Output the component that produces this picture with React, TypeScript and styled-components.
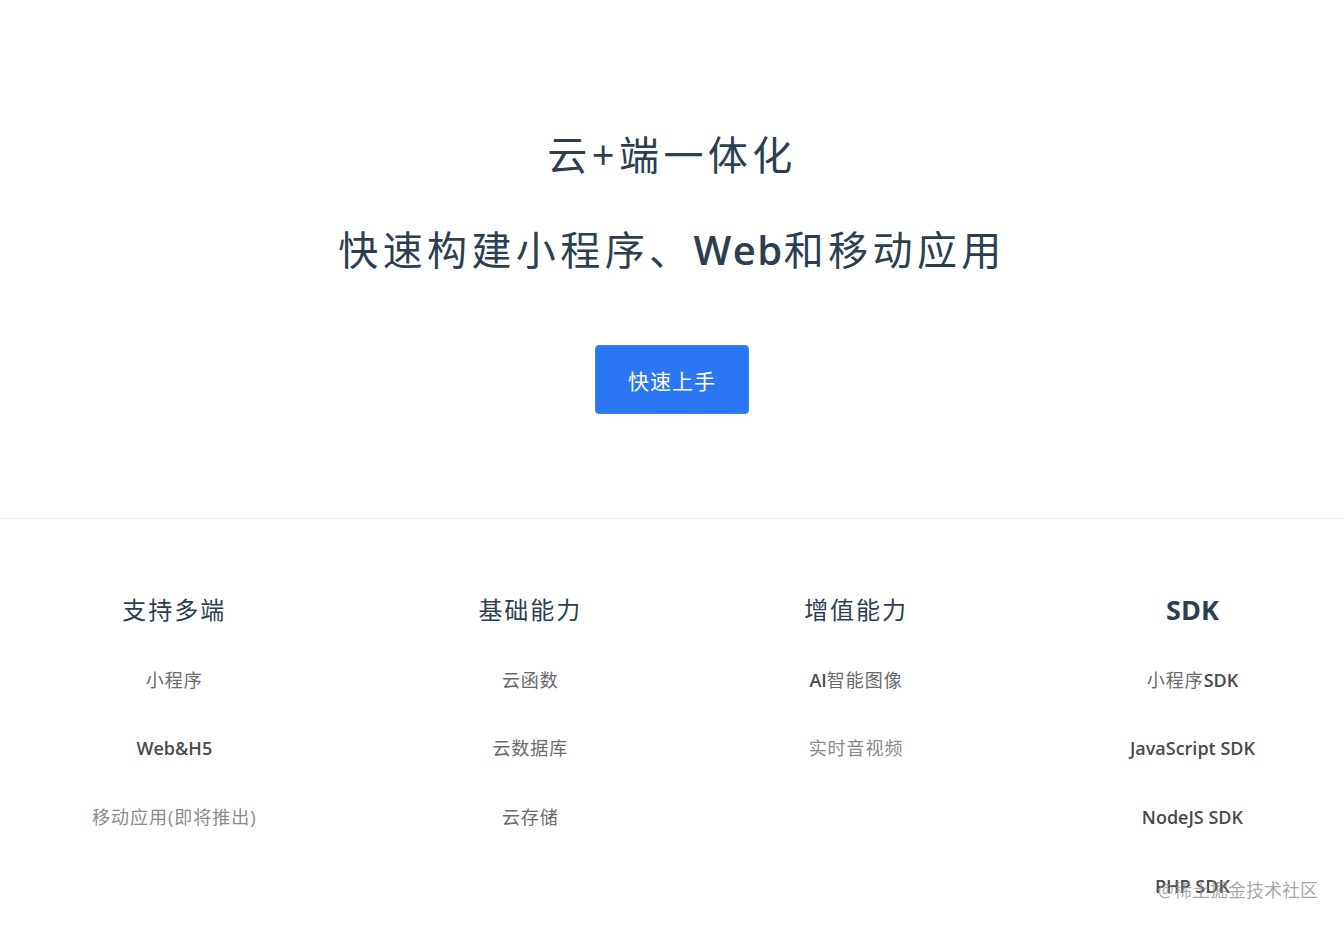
import React from "react";
import styled, { createGlobalStyle } from "styled-components";

const GlobalStyle = createGlobalStyle`
    html, body {
        margin: 0;
        padding: 0;
        background: #fff;
    }
    body {
        font-family: "Open Sans", "Noto Sans CJK SC", sans-serif;
        color: #2c3e50;
        -webkit-font-smoothing: antialiased;
    }
`;

const Page = styled.div`
    position: relative;
    min-height: 926px;
    overflow: hidden;
`;

const Hero = styled.section`
    display: flex;
    flex-direction: column;
    align-items: center;
    padding: 130px 0 104px;
    border-bottom: 1px solid #eaecef;
`;

const Title = styled.h1`
    margin: 0;
    font-size: 40px;
    line-height: 50px;
    font-weight: 400;
    letter-spacing: 4.4px;
    color: #2c3e50;
`;

const Tagline = styled.p`
    margin: 45px 0 0;
    font-size: 40px;
    line-height: 50px;
    font-weight: 400;
    letter-spacing: 4.4px;
    color: #2c3e50;

    b {
        font-weight: 600;
        letter-spacing: 1.5px;
    }
`;

const ActionButton = styled.a`
    display: flex;
    align-items: center;
    justify-content: center;
    margin-top: 70px;
    width: 154px;
    height: 69px;
    box-sizing: border-box;
    border-radius: 4px;
    border: 1px solid #3a84f7;
    background-color: #2b76f3;
    color: #fff;
    font-size: 21px;
    letter-spacing: 1px;
    cursor: pointer;
`;

const Features = styled.section`
    display: flex;
    justify-content: space-between;
    align-items: flex-start;
    padding: 75px 89px 0 92px;
`;

const Column = styled.div`
    display: flex;
    flex-direction: column;
    align-items: center;
    gap: 38.7px;
    white-space: nowrap;
`;

const Heading = styled.h2<{ $latin?: boolean }>`
    margin: 0;
    font-size: ${(p) => (p.$latin ? "27px" : "24px")};
    line-height: 32px;
    font-weight: ${(p) => (p.$latin ? 700 : 400)};
    letter-spacing: ${(p) => (p.$latin ? "0" : "2px")};
    color: #2c3e50;
`;

type Tone = "normal" | "muted";

const Item = styled.span<{ $tone?: Tone }>`
    font-size: 18px;
    line-height: 30px;
    letter-spacing: 1px;
    font-weight: 400;
    color: ${(p) => (p.$tone === "muted" ? "#8a8a8a" : "#6a6a6a")};
`;

// latin words in the list are set heavier and darker than the CJK ones
const Latin = styled.span`
    font-weight: 600;
    letter-spacing: 0;
    color: #4a4a4a;
`;

const Watermark = styled.div`
    position: absolute;
    right: 26px;
    bottom: 24px;
    font-size: 18px;
    line-height: 24px;
    color: rgba(140, 140, 140, 0.75);
    pointer-events: none;
`;

type Feature = { title: string; latin?: boolean; items: { label: string; tone?: Tone }[] };

const features: Feature[] = [
    {
        title: "支持多端",
        items: [
            { label: "小程序" },
            { label: "Web&H5" },
            { label: "移动应用(即将推出)", tone: "muted" },
        ],
    },
    {
        title: "基础能力",
        items: [{ label: "云函数" }, { label: "云数据库" }, { label: "云存储" }],
    },
    {
        title: "增值能力",
        items: [{ label: "AI智能图像" }, { label: "实时音视频", tone: "muted" }],
    },
    {
        title: "SDK",
        latin: true,
        items: [
            { label: "小程序SDK" },
            { label: "JavaScript SDK" },
            { label: "NodeJS SDK" },
            { label: "PHP SDK" },
        ],
    },
];

const renderLabel = (label: string) =>
    label.split(/([A-Za-z0-9&][A-Za-z0-9& ]*)/).map((part, i) =>
        /^[A-Za-z0-9&]/.test(part) ? <Latin key={i}>{part}</Latin> : part
    );

const App: React.FC = () => {
    return (
        <Page>
            <GlobalStyle />
            <Hero>
                <Title>云+端一体化</Title>
                <Tagline>
                    快速构建小程序、<b>Web</b>和移动应用
                </Tagline>
                <ActionButton>快速上手</ActionButton>
            </Hero>
            <Features>
                {features.map((f) => (
                    <Column key={f.title}>
                        <Heading $latin={f.latin}>{f.title}</Heading>
                        {f.items.map((it) => (
                            <Item key={it.label} $tone={it.tone}>
                                {renderLabel(it.label)}
                            </Item>
                        ))}
                    </Column>
                ))}
            </Features>
            <Watermark>@稀土掘金技术社区</Watermark>
        </Page>
    );
};

export default App;
